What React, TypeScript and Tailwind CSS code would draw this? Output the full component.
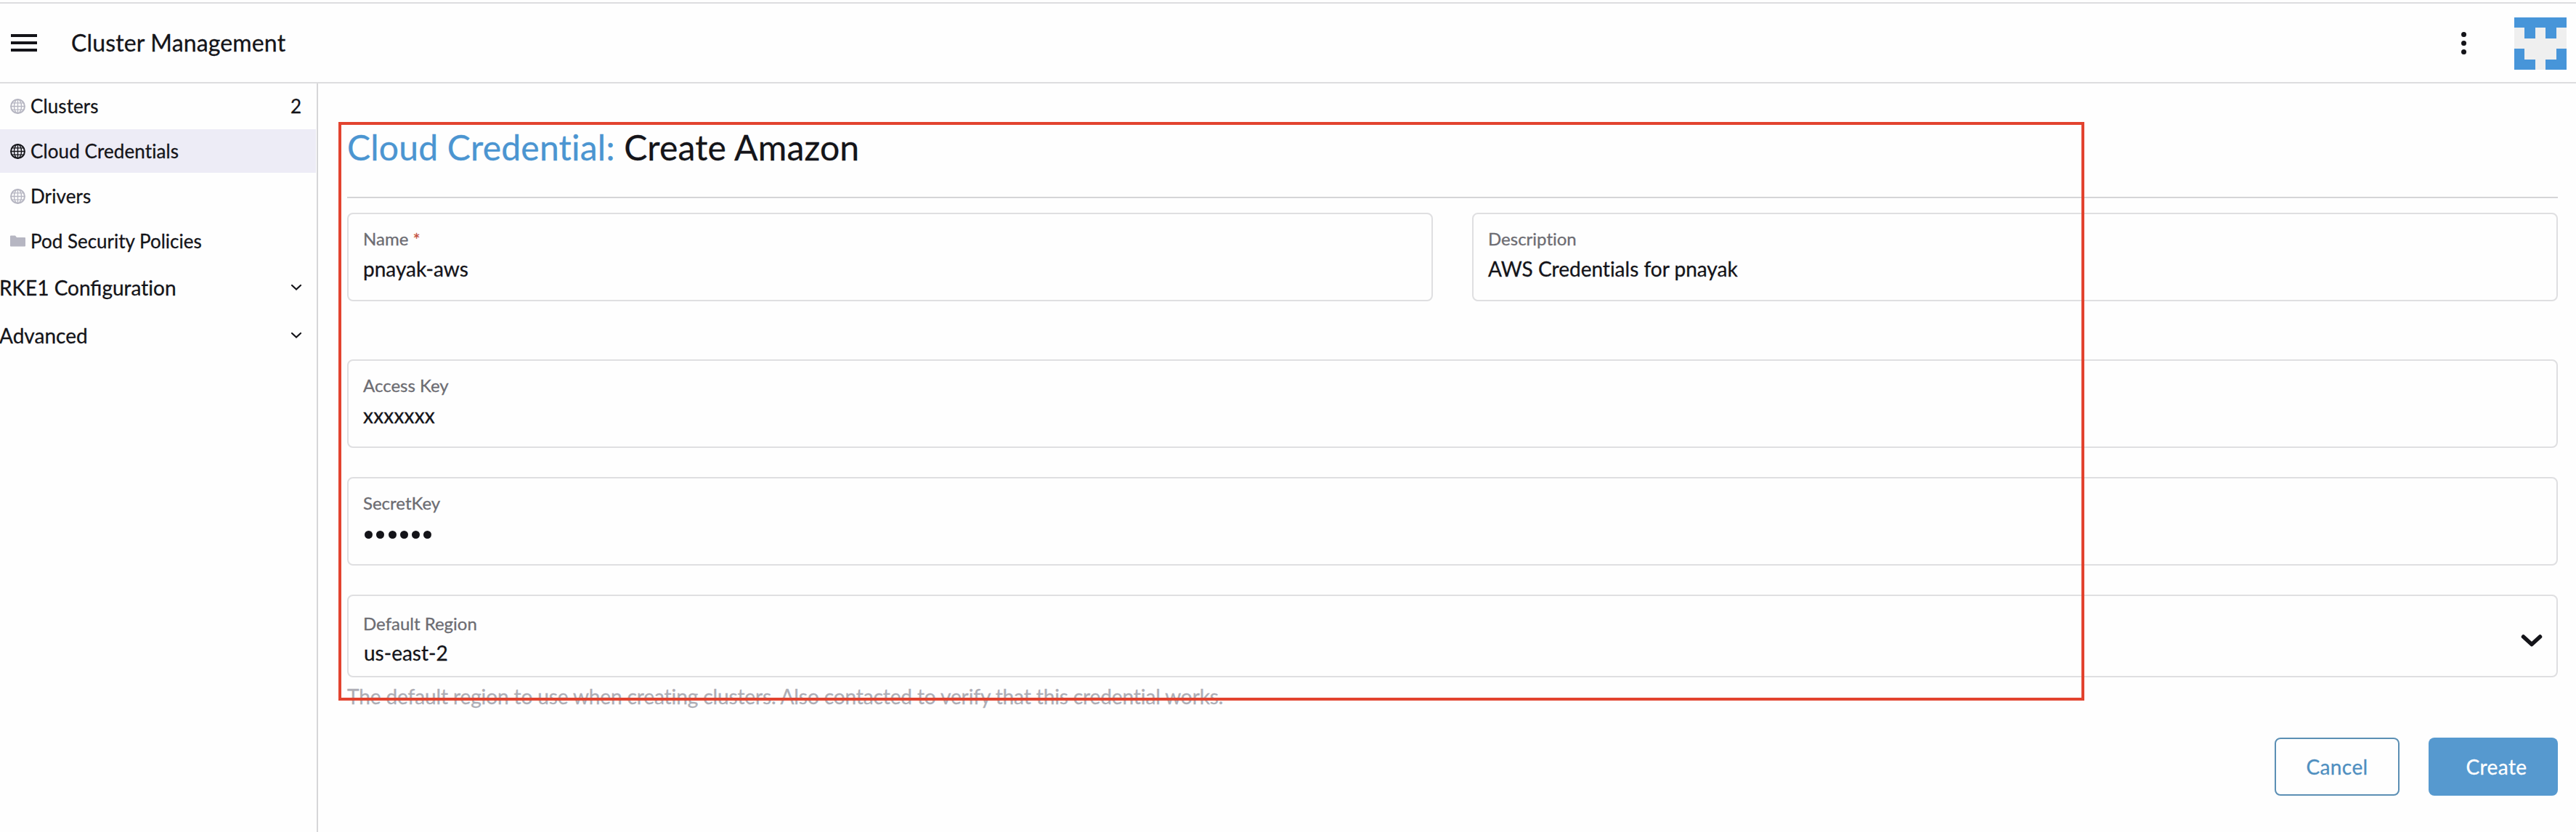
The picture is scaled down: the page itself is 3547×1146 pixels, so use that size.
import React from "react";

const AVATAR = ["11111", "01010", "00000", "10001", "11011"];

function Globe({ active = false }: { active?: boolean }) {
  return (
    <svg
      viewBox="0 0 20 20"
      className={`h-[21px] w-[21px] shrink-0 ${active ? "text-[#141419]" : "text-[#b6b6c2]"}`}
      fill="none"
      stroke="currentColor"
      strokeWidth="1.3"
    >
      <circle cx="10" cy="10" r="9" strokeWidth="1.9" />
      <ellipse cx="10" cy="10" rx="4.8" ry="9" />
      <path d="M10 1v18M1 10h18M2.6 5.6h14.8M2.6 14.4h14.8" />
    </svg>
  );
}

function Folder() {
  return (
    <svg viewBox="0 0 21 16" className="h-4 w-[21px] shrink-0" fill="#b6b6c2">
      <path d="M0 1.5Q0 .5 1 .5H7L9 3H20Q21 3 21 4V14.500Q21 15.500 20 15.500H1Q0 15.500 0 14.500Z" />
    </svg>
  );
}

function Chevron() {
  return (
    <svg viewBox="0 0 16 10" className="h-[10px] w-4" fill="none" stroke="#141419" strokeWidth="2.2" strokeLinecap="round">
      <path d="M2 2L8 7.600L14 2" />
    </svg>
  );
}

function NavItem({
  icon,
  label,
  count,
  active = false,
}: {
  icon: React.ReactNode;
  label: string;
  count?: string;
  active?: boolean;
}) {
  return (
    <div className={`mb-[2px] mr-px flex h-[60px] items-center pl-[14px] pr-5 ${active ? "bg-[#edecf6]" : ""}`}>
      {icon}
      <span className={`ml-[7px] flex-1 text-[26px] leading-[40px] ${label.length > 18 ? "" : "tracking-[0.1px]"}`}>
        {label}
      </span>
      {count && <span className="text-[26px] leading-[40px]">{count}</span>}
    </div>
  );
}

function NavGroup({ children }: { children: React.ReactNode }) {
  return (
    <div className="flex h-[66px] items-center justify-between pb-[2px] pr-5">
      <span className="text-[28px] leading-[40px]">{children}</span>
      <Chevron />
    </div>
  );
}

function Field({ label, required = false, children }: { label: string; required?: boolean; children: React.ReactNode }) {
  return (
    <div className="h-[122px] flex-1 rounded-[8px] border-2 border-[#dfdfe1] pl-5 pt-[19px]">
      <div className="text-[24px] leading-[30px] text-[#6c6c72]">
        {label}
        {required && <span className="text-[#c4513f]"> *</span>}
      </div>
      <div className="mt-[6px] flex h-[40px] items-center text-[28px] leading-[40px]">{children}</div>
    </div>
  );
}

export default function App() {
  return (
    <div className="relative flex h-[1146px] w-[3547px] flex-col overflow-hidden bg-[#fefefe] pt-[3px] font-[Lato,sans-serif] text-[#141419] [-webkit-text-stroke:0.3px] [font-variant-ligatures:none]">
      <header className="flex h-[112px] shrink-0 items-center border-y-2 border-[#dddddf] pl-[15px] pr-[13px]">
        <div className="flex w-[36px] flex-col gap-[6px]">
          <div className="h-1 bg-[#141419]" />
          <div className="h-1 bg-[#141419]" />
          <div className="h-1 bg-[#141419]" />
        </div>
        <h1 className="ml-[47px] flex-1 text-[32px] leading-[40px] tracking-[0.15px]">Cluster Management</h1>
        <div className="flex flex-col items-center gap-[5px]">
          <div className="h-[7px] w-[7px] rounded-full bg-[#141419]" />
          <div className="h-[7px] w-[7px] rounded-full bg-[#141419]" />
          <div className="h-[7px] w-[7px] rounded-full bg-[#141419]" />
        </div>
        <svg viewBox="0 0 5 5" className="mb-px ml-[66px] mt-[3px] h-[72px] w-[72px]" shapeRendering="crispEdges">
          <rect width="5" height="5" fill="#efefef" />
          {AVATAR.flatMap((row, y) =>
            [...row].map((c, x) =>
              c === "1" ? <rect key={`${x}-${y}`} x={x} y={y} width="1" height="1" fill="#4795d9" /> : null
            )
          )}
        </svg>
      </header>

      <div className="flex flex-1">
        <nav className="w-[438px] shrink-0 border-r-2 border-[#d6d6d8] pt-px">
          <NavItem icon={<Globe />} label="Clusters" count="2" />
          <NavItem icon={<Globe active />} label="Cloud Credentials" active />
          <NavItem icon={<Globe />} label="Drivers" />
          <NavItem icon={<Folder />} label="Pod Security Policies" />
          <NavGroup>
            <span className="-ml-px">
              RKE1 <span className="[font-variant-ligatures:normal]">Confi</span>guration
            </span>
          </NavGroup>
          <NavGroup>
            <span className="-ml-px">Advanced</span>
          </NavGroup>
        </nav>

        <main className="flex flex-1 flex-col pl-[40px] pr-[25px] pt-[58px]">
          <h2 className="h-[98px] text-[48px] leading-[60px] tracking-[0.22px]">
            <span className="text-[#4b95d1]">Cloud Credential:</span> Create Amazon
          </h2>
          <div className="h-[2px] bg-[#d5d5d7]" />
          <div className="mt-5 flex gap-[54px]">
            <Field label="Name" required>pnayak-aws</Field>
            <Field label="Description">AWS Credentials for pnayak</Field>
          </div>
          <div className="mt-20 flex">
            <Field label="Access Key">
              <span className="tracking-[0.2px]">xxxxxxx</span>
            </Field>
          </div>
          <div className="mt-10 flex">
            <Field label="SecretKey">
              <span className="flex gap-[5.3px] pl-[2px] pt-1">
                {[0, 1, 2, 3, 4, 5].map((i) => (
                  <span key={i} className="h-[11px] w-[11px] rounded-full bg-[#141419]" />
                ))}
              </span>
            </Field>
          </div>
          <div className="mt-10 flex h-[114px] items-start justify-between rounded-[8px] border-2 border-[#dfdfe1] pl-5 pr-[18px] pt-[23px]">
            <div>
              <div className="text-[24px] leading-[30px] text-[#6c6c72]">Default Region</div>
              <div className="mt-[5px] pl-px text-[28px] leading-[41px]">us-east-2</div>
            </div>
            <svg viewBox="0 0 32 20" className="mt-[29px] h-5 w-8" fill="none" stroke="#141419" strokeWidth="5.500" strokeLinecap="round" strokeLinejoin="round">
              <path d="M4.500 4L16 14.500L27.500 4" />
            </svg>
          </div>
          <div className="mt-[6px] text-[28px] leading-[40px] tracking-[-0.11px] text-[#adadb5]">
            The default region to use when creating clusters. Also contacted to verify that this credential works.
          </div>
          <div className="mt-[37px] flex justify-end gap-10 text-[28px] tracking-[0.4px]">
            <button className="h-20 w-[172px] rounded-[8px] border-2 border-[#5b8fb4] text-[#4f8fc0]">Cancel</button>
            <button className="h-20 w-[178px] rounded-[8px] bg-[#5699cf] pl-[9px] text-white">Create</button>
          </div>
        </main>
      </div>

      <div className="pointer-events-none absolute left-[466px] top-[168px] h-[797px] w-[2404px] border-4 border-[#e2432f]" />
    </div>
  );
}
